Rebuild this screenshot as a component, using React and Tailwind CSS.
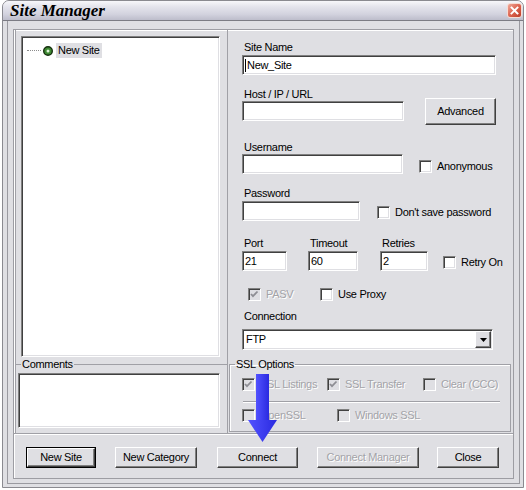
const SUNKEN =
  "border border-t-[#808080] border-l-[#808080] border-b-white border-r-white shadow-[inset_1px_1px_0_#404040,inset_-1px_-1px_0_#dfdfe3]";
const RAISED =
  "border border-t-white border-l-white border-r-[#404040] border-b-[#404040] shadow-[inset_-1px_-1px_0_#808080] bg-[#dfdfe3]";
const DIS = "text-[#a3a3a8] [text-shadow:1px_1px_0_#fff]";

function Check({ checked, disabled }) {
  return (
    <span
      className={`flex w-[13px] h-[13px] shrink-0 ${SUNKEN} ${
        disabled ? "bg-[#dfdfe3]" : "bg-white"
      }`}
    >
      {checked && (
        <svg width="11" height="11" viewBox="0 0 11 11">
          <polyline
            points="2,5 4,7.2 8.5,2.5"
            fill="none"
            stroke={disabled ? "#8e8e94" : "#000"}
            strokeWidth="1.8"
          />
        </svg>
      )}
    </span>
  );
}

function CheckItem({ label, checked, disabled, className }) {
  return (
    <div className={`flex items-center h-[13px] ${className || ""}`}>
      <Check checked={checked} disabled={disabled} />
      <span className={`ml-[5px] whitespace-nowrap ${disabled ? DIS : ""}`}>{label}</span>
    </div>
  );
}

function Btn({ children, className, disabled }) {
  return (
    <div
      className={`flex items-center justify-center h-[21px] shrink-0 ${RAISED} ${className || ""} ${
        disabled ? DIS : ""
      }`}
    >
      {children}
    </div>
  );
}

function Label({ children }) {
  return <div className="h-[13px] ml-[2px] whitespace-nowrap">{children}</div>;
}

function Field({ className, children }) {
  return (
    <div className={`flex items-center h-[20px] bg-white pl-[2px] shrink-0 ${SUNKEN} ${className || ""}`}>
      {children}
    </div>
  );
}

function CloseBtn() {
  return (
    <div className="w-[15px] h-[15px] rounded-[3px] border border-[#f6dcd4] bg-[linear-gradient(135deg,#f0a898,#dc6450_50%,#bc3c28)] flex items-center justify-center">
      <svg width="9" height="9" viewBox="0 0 9 9">
        <path d="M1.5 1.5 L7.5 7.5 M7.5 1.5 L1.5 7.5" stroke="#fff" strokeWidth="1.9" strokeLinecap="square" />
      </svg>
    </div>
  );
}

export default function App() {
  return (
    <div className="relative w-[526px] h-[490px] bg-white pl-[2px] overflow-hidden font-['Liberation_Sans',Arial,sans-serif] text-[11px] leading-[13px] tracking-[-0.3px] text-black">
      <div className="w-[522px] h-[488px] flex flex-col border border-[#8a8a90] rounded-t-[7px] bg-[#dfdfe3] overflow-hidden">
        {/* Title bar */}
        <div className="h-[19px] shrink-0 flex items-center justify-between pl-[7px] pr-[1px] bg-[linear-gradient(to_bottom,#f7f7fa_0%,#e4e4ec_30%,#d2d2de_70%,#bdbdcb_100%)]">
          <span className="font-['Liberation_Serif',serif] italic font-bold text-[17px] leading-[19px] tracking-normal">
            Site Manager
          </span>
          <CloseBtn />
        </div>
        {/* Body */}
        <div className="flex-1 flex flex-col border-t border-[#7c7c84] pl-[4px] pr-[3px] pb-[3px]">
          <div className="flex-1 flex flex-col border-l border-r border-b border-[#9a9aa0] pl-[5px] pr-[5px] pt-[8px] pb-[4px]">
            <div className="flex-1 flex flex-col border border-[#9d9da3] shadow-[inset_1px_1px_0_#fff]">
              {/* top area */}
              <div className="h-[403px] flex">
                {/* Left column */}
                <div className="ml-[1px] w-[213px] flex flex-col border-l border-r border-[#a0a0a6]">
                  <div className={`ml-[5px] mt-[6px] w-[199px] h-[321px] bg-white ${SUNKEN}`}>
                    <div className="flex items-center mt-[6px] ml-[5px] h-[15px]">
                      <div className="w-[14px] border-t border-dotted border-[#8c8c8c]" />
                      <svg className="ml-[2px]" width="10" height="10" viewBox="0 0 10 10">
                        <circle cx="5" cy="5" r="4.3" fill="#3e8a32" stroke="#16300f" strokeWidth="1.4" />
                        <circle cx="5" cy="5" r="1.5" fill="#dff3d8" />
                      </svg>
                      <span className="ml-[3px] px-[2px] h-[15px] leading-[15px] bg-[#dfdfe3]">New Site</span>
                    </div>
                  </div>
                  <fieldset className="mt-[1px] border-t border-[#a0a0a6]">
                    <legend className="ml-[5px] px-[1px] leading-[13px]">Comments</legend>
                    <div className={`ml-[2px] mt-[2px] w-[202px] h-[55px] bg-white ${SUNKEN}`} />
                  </fieldset>
                </div>

                {/* Right column */}
                <div className="flex-1 flex flex-col">
                  <div className="pl-[14px] flex flex-col">
                    <div className="mt-[11px]">
                      <Label>Site Name</Label>
                    </div>
                    <Field className="mt-[1px] w-[254px]">
                      <span className="w-[1px] h-[13px] bg-black mr-[1px]" />
                      <span>New_Site</span>
                    </Field>

                    <div className="mt-[13px] h-[33px] flex items-start">
                      <div className="flex flex-col">
                        <Label>Host / IP / URL</Label>
                        <Field className="w-[162px]" />
                      </div>
                      <Btn className="ml-[21px] mt-[10px] w-[71px] !h-[27px]">Advanced</Btn>
                    </div>

                    <div className="mt-[20px]">
                      <Label>Username</Label>
                    </div>
                    <div className="flex items-start h-[20px]">
                      <Field className="w-[161px]" />
                      <CheckItem className="ml-[16px] mt-[6px]" label="Anonymous" />
                    </div>

                    <div className="mt-[13px]">
                      <Label>Password</Label>
                    </div>
                    <div className="mt-[1px] flex items-start h-[20px]">
                      <Field className="w-[118px]" />
                      <CheckItem className="ml-[17px] mt-[5px]" label="Don't save password" />
                    </div>

                    <div className="mt-[16px] flex items-start">
                      <div className="flex flex-col w-[45px]">
                        <Label>Port</Label>
                        <Field className="mt-[1px] w-[45px]">21</Field>
                      </div>
                      <div className="flex flex-col w-[50px] ml-[21px]">
                        <Label>Timeout</Label>
                        <Field className="mt-[1px] w-[50px]">60</Field>
                      </div>
                      <div className="flex flex-col w-[48px] ml-[22px]">
                        <Label>Retries</Label>
                        <Field className="mt-[1px] w-[48px]">2</Field>
                      </div>
                      <CheckItem className="ml-[15px] mt-[19px]" label="Retry On" />
                    </div>

                    <div className="mt-[17px] flex items-center">
                      <CheckItem className="ml-[6px] w-[72px]" label="PASV" checked disabled />
                      <CheckItem label="Use Proxy" />
                    </div>

                    <div className="mt-[9px]">
                      <Label>Connection</Label>
                    </div>
                    <div className={`mt-[6px] w-[251px] h-[21px] flex items-center bg-white ${SUNKEN}`}>
                      <span className="pl-[3px]">FTP</span>
                      <div className={`ml-auto mr-[1px] w-[16px] h-[17px] flex items-center justify-center ${RAISED}`}>
                        <svg width="7" height="4" viewBox="0 0 7 4">
                          <polygon points="0,0 7,0 3.5,4" fill="#000" />
                        </svg>
                      </div>
                    </div>
                  </div>

                  <fieldset className="ml-[1px] mr-[2px] mt-[8px] pb-[9px] border border-[#a0a0a6] shadow-[inset_1px_1px_0_#fff]">
                    <legend className="ml-[5px] px-[1px] leading-[13px]">SSL Options</legend>
                    <div className="mt-[7px] ml-[12px] flex items-center">
                      <CheckItem className="w-[85px]" label="SSL Listings" checked disabled />
                      <CheckItem className="w-[96px]" label="SSL Transfer" checked disabled />
                      <CheckItem label="Clear (CCC)" disabled />
                    </div>
                    <div className="mt-[10px] ml-[13px] w-[257px] h-[2px] border-t border-[#a0a0a6] border-b border-b-white" />
                    <div className="mt-[6px] ml-[12px] flex items-center">
                      <CheckItem className="w-[95px]" label="OpenSSL" disabled />
                      <CheckItem label="Windows SSL" disabled />
                    </div>
                  </fieldset>
                </div>
              </div>

              {/* separator */}
              <div className="h-[2px] border-t border-[#a0a0a6] border-b border-b-white" />

              {/* buttons */}
              <div className="flex items-start pt-[12px]">
                <Btn className="ml-[13px] mt-[1px] w-[68px] !h-[19px] outline outline-black">New Site</Btn>
                <Btn className="ml-[20px] w-[82px]">New Category</Btn>
                <Btn className="ml-[20px] w-[81px]">Connect</Btn>
                <Btn className="ml-[19px] w-[102px]" disabled>Connect Manager</Btn>
                <Btn className="ml-[18px] w-[62px]">Close</Btn>
              </div>
            </div>
          </div>
        </div>
      </div>

      {/* Blue arrow overlay */}
      <svg className="absolute left-[248px] top-[374px]" width="30" height="69" viewBox="0 0 30 69">
        <defs>
          <linearGradient id="ag" x1="0" x2="1" y1="0" y2="0">
            <stop offset="0" stopColor="#5252ff" />
            <stop offset="1" stopColor="#2a2ae0" />
          </linearGradient>
        </defs>
        <rect x="8" y="0" width="13" height="48" fill="url(#ag)" />
        <polygon points="0,46 29,46 14.5,68" fill="url(#ag)" />
      </svg>
    </div>
  );
}
